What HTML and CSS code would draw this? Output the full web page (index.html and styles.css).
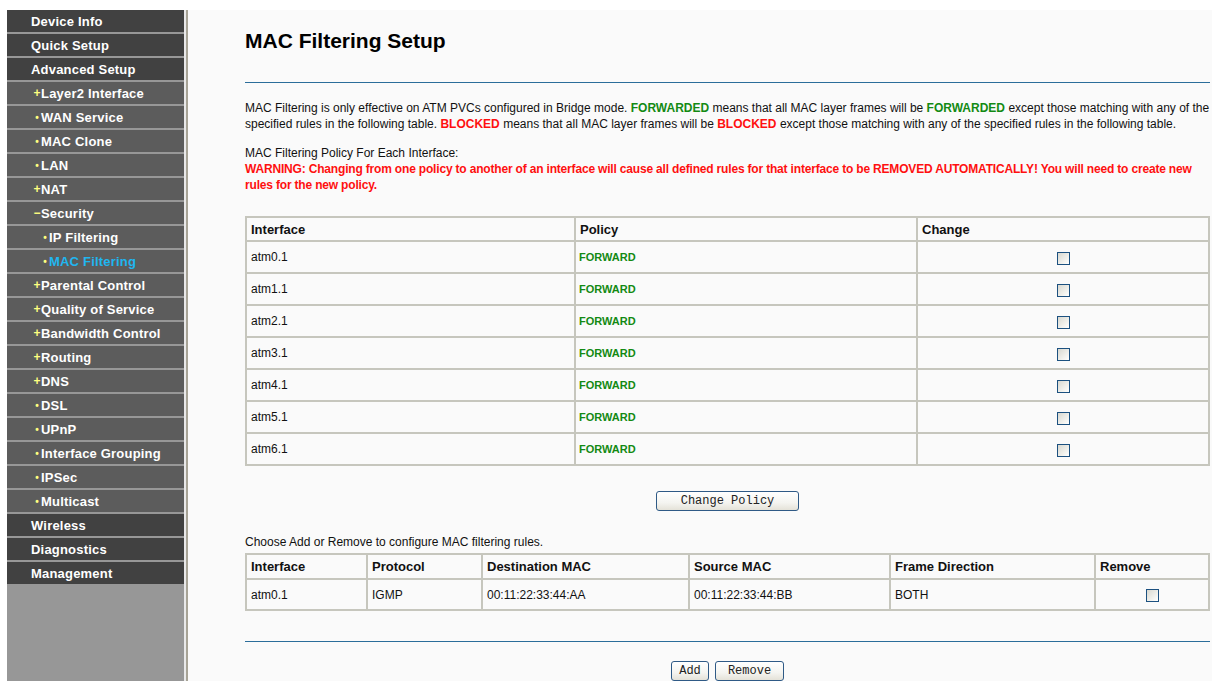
FILE: index.html
```html
<!DOCTYPE html>
<html>
<head>
<meta charset="utf-8">
<title>MAC Filtering Setup</title>
<link rel="stylesheet" href="styles.css">
</head>
<body>
<div class="frame">
  <nav class="menu">
    <a class="item top">Device Info</a>
    <a class="item top">Quick Setup</a>
    <a class="item top">Advanced Setup</a>
    <a class="item sub"><span class="mk plus">+</span>Layer2 Interface</a>
    <a class="item sub"><span class="mk dot">•</span>WAN Service</a>
    <a class="item sub"><span class="mk dot">•</span>MAC Clone</a>
    <a class="item sub"><span class="mk dot">•</span>LAN</a>
    <a class="item sub"><span class="mk plus">+</span>NAT</a>
    <a class="item sub"><span class="mk minus">−</span>Security</a>
    <a class="item subsub"><span class="mk dot">•</span>IP Filtering</a>
    <a class="item subsub active"><span class="mk dot">•</span>MAC Filtering</a>
    <a class="item sub"><span class="mk plus">+</span>Parental Control</a>
    <a class="item sub"><span class="mk plus">+</span>Quality of Service</a>
    <a class="item sub"><span class="mk plus">+</span>Bandwidth Control</a>
    <a class="item sub"><span class="mk plus">+</span>Routing</a>
    <a class="item sub"><span class="mk plus">+</span>DNS</a>
    <a class="item sub"><span class="mk dot">•</span>DSL</a>
    <a class="item sub"><span class="mk dot">•</span>UPnP</a>
    <a class="item sub"><span class="mk dot">•</span>Interface Grouping</a>
    <a class="item sub"><span class="mk dot">•</span>IPSec</a>
    <a class="item sub"><span class="mk dot">•</span>Multicast</a>
    <a class="item top">Wireless</a>
    <a class="item top">Diagnostics</a>
    <a class="item top">Management</a>
  </nav>
  <div class="divider"></div>
  <main class="content">
    <h1 class="title">MAC Filtering Setup</h1>
    <hr class="rule rule-top">
    <p class="intro">MAC Filtering is only effective on ATM PVCs configured in Bridge mode. <b class="green">FORWARDED</b> means that all MAC layer frames will be <b class="green">FORWARDED</b> except those matching with any of the<br>specified rules in the following table. <b class="red">BLOCKED</b> means that all MAC layer frames will be <b class="red">BLOCKED</b> except those matching with any of the specified rules in the following table.</p>
    <p class="policy">MAC Filtering Policy For Each Interface:<br>
    <b class="red warning">WARNING: Changing from one policy to another of an interface will cause all defined rules for that interface to be REMOVED AUTOMATICALLY! You will need to create new<br>rules for the new policy.</b></p>

    <table class="grid policy-table">
      <colgroup><col class="c-if"><col class="c-pol"><col class="c-chg"></colgroup>
      <tr class="head"><th>Interface</th><th>Policy</th><th>Change</th></tr>
      <tr><td>atm0.1</td><td class="fwd">FORWARD</td><td class="center"><input type="checkbox" class="box"></td></tr>
      <tr><td>atm1.1</td><td class="fwd">FORWARD</td><td class="center"><input type="checkbox" class="box"></td></tr>
      <tr><td>atm2.1</td><td class="fwd">FORWARD</td><td class="center"><input type="checkbox" class="box"></td></tr>
      <tr><td>atm3.1</td><td class="fwd">FORWARD</td><td class="center"><input type="checkbox" class="box"></td></tr>
      <tr><td>atm4.1</td><td class="fwd">FORWARD</td><td class="center"><input type="checkbox" class="box"></td></tr>
      <tr><td>atm5.1</td><td class="fwd">FORWARD</td><td class="center"><input type="checkbox" class="box"></td></tr>
      <tr><td>atm6.1</td><td class="fwd">FORWARD</td><td class="center"><input type="checkbox" class="box"></td></tr>
    </table>

    <div class="actions actions-policy">
      <button class="btn btn-policy">Change Policy</button>
    </div>

    <p class="hint">Choose Add or Remove to configure MAC filtering rules.</p>

    <table class="grid rules-table">
      <colgroup><col class="r-if"><col class="r-proto"><col class="r-dst"><col class="r-src"><col class="r-dir"><col class="r-rm"></colgroup>
      <tr class="head"><th>Interface</th><th>Protocol</th><th>Destination MAC</th><th>Source MAC</th><th>Frame Direction</th><th>Remove</th></tr>
      <tr><td>atm0.1</td><td>IGMP</td><td>00:11:22:33:44:AA</td><td>00:11:22:33:44:BB</td><td>BOTH</td><td class="center"><input type="checkbox" class="box"></td></tr>
    </table>

    <hr class="rule rule-bottom">

    <div class="actions actions-rules">
      <button class="btn btn-add">Add</button>
      <button class="btn btn-remove">Remove</button>
    </div>
  </main>
</div>
</body>
</html>
```
FILE: styles.css
```css
html, body {
  margin: 0;
  padding: 0;
  background: #ffffff;
  height: 100%;
  overflow: hidden;
}

.frame {
  display: flex;
  padding: 10px 0 0 7px;
  height: 100%;
  box-sizing: border-box;
  font-family: "Liberation Sans", Arial, sans-serif;
}

/* ---- left navigation ---- */
.menu {
  width: 177px;
  flex: none;
  display: flex;
  flex-direction: column;
  gap: 2px;
  background: #979797;
}

.item {
  display: flex;
  align-items: center;
  height: 22px;
  color: #ffffff;
  font-size: 13px;
  font-weight: bold;
  letter-spacing: 0.2px;
  white-space: nowrap;
  cursor: pointer;
}

.item.top {
  background: #414141;
  padding-left: 24px;
}

.item.sub {
  background: #5c5c5c;
  padding-left: 26px;
}

.item.subsub {
  background: #5c5c5c;
  padding-left: 34px;
}

.item.active {
  color: #1fb6f0;
}

.mk {
  display: inline-block;
  width: 8px;
  color: #ffff80;
  text-align: center;
  font-size: 12px;
}

.mk.dot {
  font-size: 10px;
}

.divider {
  width: 4px;
  flex: none;
  background: linear-gradient(to right, #e9e9e9 0 2px, #a7a396 2px 4px);
}

/* ---- main panel ---- */
.content {
  flex: 1;
  background: #fafafa;
  padding: 19px 2px 0 57px;
  color: #111111;
  font-size: 12px;
  overflow: hidden;
}

.title {
  margin: 0;
  font-size: 21px;
  line-height: 24px;
  font-weight: bold;
  color: #000000;
}

.rule {
  border: 0;
  height: 1px;
  background: #2b6d9a;
  margin: 0;
}

.rule-top {
  margin-top: 29px;
}

.rule-bottom {
  margin-top: 30px;
}

.intro {
  margin: 17px 0 0;
  line-height: 16px;
  white-space: nowrap;
}

.policy {
  margin: 13px 0 0;
  line-height: 16px;
  white-space: nowrap;
}

.warning {
  letter-spacing: -0.18px;
}

.green { color: #138a13; }
.red { color: #ff1010; }

/* ---- tables ---- */
.grid {
  border-collapse: collapse;
  width: 965px;
  table-layout: fixed;
  background: #fafafa;
}

.grid th,
.grid td {
  border: 2px solid #c6c6bd;
  padding: 0 0 0 4px;
  text-align: left;
  font-size: 12px;
  color: #111111;
  white-space: nowrap;
}

.grid th {
  font-size: 13px;
  font-weight: bold;
}

.grid .center {
  text-align: center;
  padding: 0;
}

.policy-table {
  margin-top: 23px;
}

.policy-table .head { height: 24px; }
.policy-table tr { height: 32px; }

.c-if { width: 329px; }
.c-pol { width: 342px; }

.fwd {
  color: #138a13 !important;
  font-weight: bold;
  font-size: 11px !important;
  padding-left: 3px !important;
}

.rules-table {
  margin-top: 3px;
}

.rules-table .head { height: 25px; }
.rules-table tr { height: 31px; }

.r-if { width: 121px; }
.r-proto { width: 115px; }
.r-dst { width: 207px; }
.r-src { width: 201px; }
.r-dir { width: 205px; }

.box {
  appearance: none;
  -webkit-appearance: none;
  width: 13px;
  height: 13px;
  margin: 2px 0 0;
  border: 1px solid #1c5180;
  background: linear-gradient(135deg, #d8d8d0 0%, #f4f4f0 70%, #ffffff 100%);
  vertical-align: middle;
  box-sizing: border-box;
}

/* ---- buttons ---- */
.actions {
  display: flex;
  justify-content: center;
  gap: 6px;
  width: 965px;
}

.actions-policy {
  margin-top: 25px;
}

.actions-rules {
  margin-top: 19px;
}

.btn {
  height: 20px;
  padding: 0;
  border: 1px solid #2f5a86;
  border-radius: 3px;
  background: linear-gradient(to bottom, #ffffff 0%, #f4f4f0 60%, #e4e2d8 100%);
  font-family: "Liberation Mono", "Courier New", monospace;
  font-size: 12px;
  color: #222222;
  cursor: pointer;
}

.btn-policy { width: 143px; }
.btn-add { width: 38px; }
.btn-remove { width: 69px; }

.hint {
  margin: 23px 0 0;
  line-height: 16px;
}
```
